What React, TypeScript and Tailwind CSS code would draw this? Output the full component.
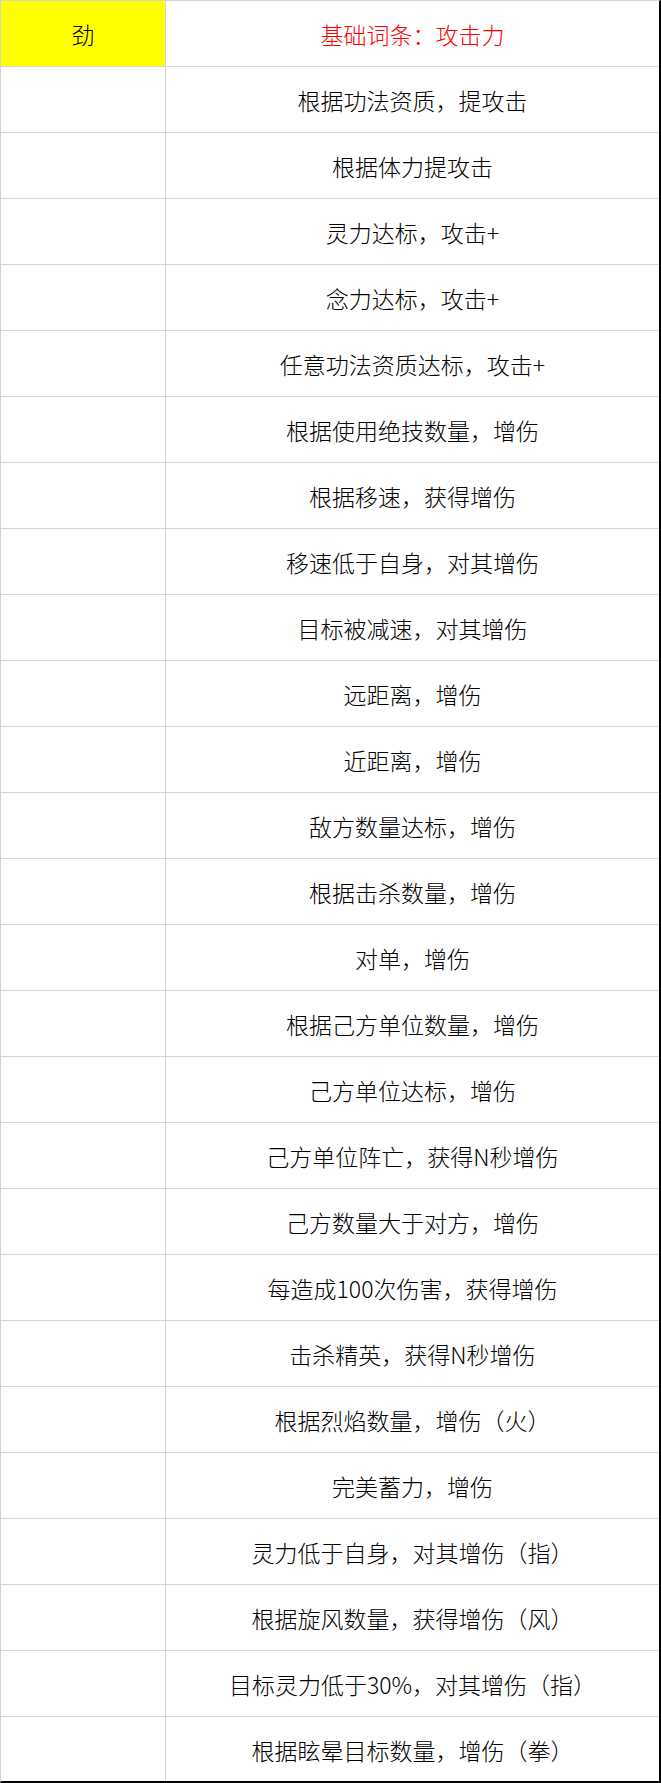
import React from "react";

const items = [
  "根据功法资质，提攻击",
  "根据体力提攻击",
  "灵力达标，攻击+",
  "念力达标，攻击+",
  "任意功法资质达标，攻击+",
  "根据使用绝技数量，增伤",
  "根据移速，获得增伤",
  "移速低于自身，对其增伤",
  "目标被减速，对其增伤",
  "远距离，增伤",
  "近距离，增伤",
  "敌方数量达标，增伤",
  "根据击杀数量，增伤",
  "对单，增伤",
  "根据己方单位数量，增伤",
  "己方单位达标，增伤",
  "己方单位阵亡，获得N秒增伤",
  "己方数量大于对方，增伤",
  "每造成100次伤害，获得增伤",
  "击杀精英，获得N秒增伤",
  "根据烈焰数量，增伤（火）",
  "完美蓄力，增伤",
  "灵力低于自身，对其增伤（指）",
  "根据旋风数量，获得增伤（风）",
  "目标灵力低于30%，对其增伤（指）",
  "根据眩晕目标数量，增伤（拳）",
];

export default function App() {
  const font = { fontFamily: '"Noto Sans CJK SC", "Noto Sans", sans-serif' };
  return (
    <div
      className="w-[661px] bg-white border-l border-t border-l-[#d4d4d4] border-t-[#d4d4d4] border-r-2 border-b-2 border-r-black border-b-black text-[23px] font-light text-black"
      style={font}
    >
      <div className="flex h-[66px] border-b border-[#d4d4d4]">
        <div className="w-[165px] border-r border-[#d4d4d4] bg-[#ffff00] flex items-center justify-center pt-[1px]">
          劲
        </div>
        <div className="flex-1 flex items-center justify-center text-[#ff0000] pt-[1px]">
          基础词条：攻击力
        </div>
      </div>
      {items.map((t, i) => {
        const last = i === items.length - 1;
        return (
          <div
            key={i}
            className={
              last
                ? "flex h-[64px]"
                : "flex h-[66px] border-b border-[#d4d4d4]"
            }
          >
            <div className="w-[165px] border-r border-[#d4d4d4]" />
            <div className="flex-1 flex items-center justify-center pt-[2px]">
              {t}
            </div>
          </div>
        );
      })}
    </div>
  );
}
